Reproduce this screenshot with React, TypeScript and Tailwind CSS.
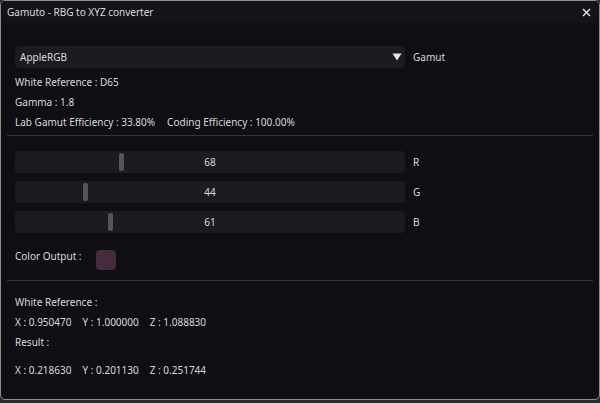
import React from "react";

interface channel {
  label: string;
  value: number;
}

const channels: channel[] = [
  { label: "R", value: 68 },
  { label: "G", value: 44 },
  { label: "B", value: 61 },
];

function Slider({ value, label }: channel) {
  // grab travels over the 390px track, value range 0..255
  const left = 2 + (value / 255) * 381;
  return (
    <div className="flex items-center h-[22px]">
      <div className="relative w-[390px] h-[22px] rounded-[4px] bg-[#1c1b21] flex items-center justify-center">
        <div
          className="absolute top-[2px] w-[5px] h-[18px] rounded-[2px] bg-[#55545c]"
          style={{ left: left }}
        />
        <span className="mt-px">{value}</span>
      </div>
      <span className="ml-[8px]">{label}</span>
    </div>
  );
}

export default function App() {
  return (
    <div className="w-[600px] h-[403px] bg-[#2a2a2c] text-[10px] text-[#d9d9dc]" style={{ fontFamily: '"Noto Sans", sans-serif' }}>
      <div className="w-[600px] h-[400px] border border-[#8e8e92] rounded-[5px] bg-[#0f0e13] flex flex-col overflow-hidden">
        <div className="h-[22px] bg-[#141318] flex items-center justify-between pl-[6px] pr-[8px] shrink-0">
          <span>Gamuto - RBG to XYZ converter</span>
          <svg width="9" height="9" viewBox="0 0 9 9">
            <path d="M1 1 L8 8 M8 1 L1 8" stroke="#e6e6e6" strokeWidth="1.4" />
          </svg>
        </div>

        <div className="flex flex-col px-[6px]">
          <div className="pl-[8px] flex flex-col">
            <div className="flex items-center mt-[23px] h-[22px]">
              <div className="w-[390px] h-[22px] rounded-[4px] bg-[#1c1b21] flex items-center justify-between pl-[5px] pr-[3px]">
                <span>AppleRGB</span>
                <svg width="10" height="8" viewBox="0 0 10 8">
                  <path d="M0.5 0.5 H9.5 L5 7.5 Z" fill="#e6e6e6" />
                </svg>
              </div>
              <span className="ml-[8px]">Gamut</span>
            </div>
            <div className="h-[20px] mt-[4px] flex items-center">White Reference : D65</div>
            <div className="h-[20px] flex items-center">Gamma : 1.8</div>
            <div className="h-[20px] flex items-center gap-[12px]">
              <span>Lab Gamut Efficiency : 33.80%</span>
              <span>Coding Efficiency : 100.00%</span>
            </div>
          </div>

          <div className="h-px bg-[#38373f] mt-[3px]" />

          <div className="pl-[8px] flex flex-col gap-[8px] mt-[15px]">
            {channels.map((c) => (
              <Slider key={c.label} label={c.label} value={c.value} />
            ))}
          </div>

          <div className="pl-[8px] flex items-start mt-[17px]">
            <span className="w-[81px] leading-[12px]">Color Output :</span>
            <div className="w-[20px] h-[20px] rounded-[4px] bg-[rgb(68,44,61)]" />
          </div>

          <div className="h-px bg-[#38373f] mt-[10px]" />

          <div className="pl-[8px] flex flex-col mt-[11px]">
            <div className="h-[20px] flex items-center">White Reference :</div>
            <div className="h-[20px] flex items-center gap-[11px]">
              <span>X : 0.950470</span>
              <span>Y : 1.000000</span>
              <span>Z : 1.088830</span>
            </div>
            <div className="h-[20px] flex items-center">Result :</div>
            <div className="h-[20px] flex items-center gap-[11px] mt-[8px]">
              <span>X : 0.218630</span>
              <span>Y : 0.201130</span>
              <span>Z : 0.251744</span>
            </div>
          </div>
        </div>
      </div>
    </div>
  );
}
